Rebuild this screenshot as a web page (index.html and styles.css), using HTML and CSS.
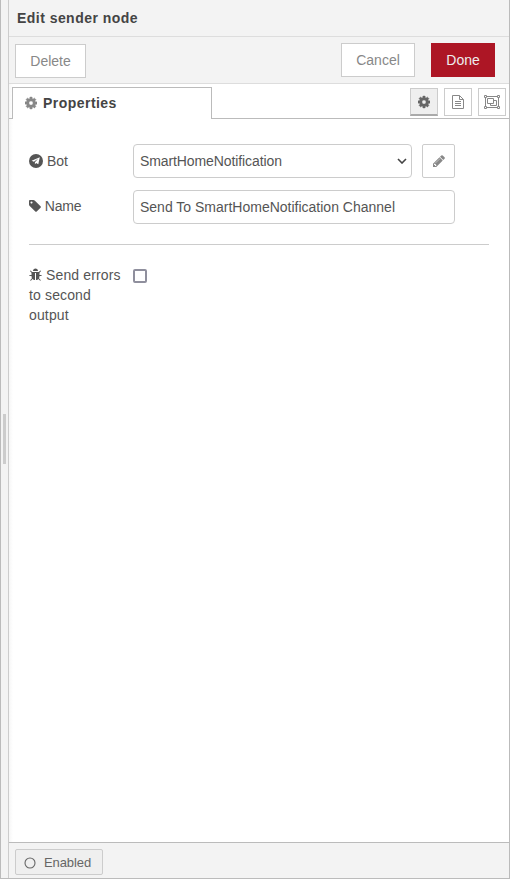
FILE: index.html
```html
<!DOCTYPE html>
<html lang="en">
<head>
<meta charset="utf-8">
<title>Edit sender node</title>
<link rel="stylesheet" href="styles.css">
</head>
<body>
<svg class="defs" width="0" height="0">
  <symbol id="cog" viewBox="128 0 1536 1792"><path d="M1152 896q0-106-75-181t-181-75-181 75-75 181 75 181 181 75 181-75 75-181zm512-109v222q0 12-8 23t-20 13l-185 28q-19 54-39 91 35 50 107 138 10 12 10 25t-9 23q-27 37-99 108t-94 71q-12 0-26-9l-138-108q-44 23-91 38-16 136-29 186-7 28-36 28h-222q-14 0-24.5-8.5t-11.5-21.5l-28-184q-49-16-90-37l-141 107q-10 9-25 9-14 0-25-11-126-114-165-168-7-10-7-23 0-12 8-23 15-21 51-66.5t54-70.5q-27-50-41-99l-183-27q-13-2-21-12.5t-8-23.5v-222q0-12 8-23t19-13l186-28q14-46 39-92-40-57-107-138-10-12-10-24 0-10 9-23 26-36 98.5-107.5t94.5-71.5q13 0 26 10l138 107q44-23 91-38 16-136 29-186 7-28 36-28h222q14 0 24.5 8.5t11.5 21.5l28 184q49 16 90 37l142-107q9-9 24-9 13 0 25 10 129 119 165 170 7 8 7 22 0 12-8 23-15 21-51 66.5t-54 70.5q26 50 41 98l183 28q13 2 21 12.5t8 23.5z"/></symbol>
</svg>
<div class="tray">
  <div class="resize-handle"><span class="grip"></span></div>
  <main class="editor">
    <header class="title">Edit sender node</header>
    <div class="toolbar">
      <button class="btn delete">Delete</button>
      <button class="btn cancel">Cancel</button>
      <button class="btn primary">Done</button>
    </div>
    <div class="tabs">
      <div class="tab"><svg class="cog" width="12" height="14"><use href="#cog"/></svg>Properties</div>
      <div class="tab-buttons">
        <button class="icon-btn selected"><svg class="cog" width="12" height="14"><use href="#cog"/></svg></button>
        <button class="icon-btn"><svg class="line" width="12" height="14" viewBox="0 0 12 14"><path d="M.5.5H7.500L11.500 4.500V13.500H.5zM7.500.5V4.500H11.500M3 6.500H9M3 8.500H9M3 10.500H9"/></svg></button>
        <button class="icon-btn"><svg class="line" width="16" height="14" viewBox="0 0 16 14"><path d="M3 1.500H13M3 12.500H13M1.500 3V11M14.500 3V11M.5.5h2v2h-2zM13.500.5h2v2h-2zM.5 11.500h2v2h-2zM13.500 11.500h2v2h-2zM3.500 3.500h6v5h-6zM9.500 5.500h3v5h-6v-2"/></svg></button>
      </div>
    </div>
    <section class="form">
      <div class="row">
        <label><svg width="14" height="14" viewBox="0 0 14 14"><circle cx="7" cy="7" r="7"/><path fill="#fff" d="M10.800 3.200 2.600 6.800 4.900 7.700 9.300 4.600 5.900 8.200 5.900 10.200 7.100 8.900 9.300 10.300z"/></svg> Bot</label>
        <div class="field select"><span>SmartHomeNotification</span><svg class="chevron" width="10" height="6" viewBox="0 0 10 6"><path d="M1 1 5 5 9 1"/></svg></div>
        <button class="edit"><svg width="12" height="14" viewBox="128 0 1536 1792"><path d="M491 1536l91-91-235-235-91 91v107h128v128h107zm523-928q0-22-22-22-10 0-17 7l-542 542q-7 7-7 17 0 22 22 22 10 0 17-7l542-542q7-7 7-17zm-54-192l416 416-832 832h-416v-416zm683 96q0 53-37 90l-166 166-416-416 166-165q36-38 90-38 53 0 91 38l235 234q37 39 37 91z"/></svg></button>
      </div>
      <div class="row">
        <label class="name-label"><svg width="12" height="14" viewBox="128 0 1536 1792"><path d="M576 448q0-53-37.500-90.500t-90.500-37.500-90.500 37.500-37.500 90.500 37.500 90.500 90.500 37.500 90.500-37.500 37.500-90.500zm1067 576q0 53-37 90l-491 492q-39 37-91 37-53 0-90-37l-715-716q-38-37-64.500-101t-26.500-117v-416q0-52 38-90t90-38h416q53 0 117 26.500t102 64.500l715 714q37 39 37 91z"/></svg> Name</label>
        <div class="field name">Send To SmartHomeNotification Channel</div>
      </div>
      <hr>
      <div class="row errors">
        <label><svg width="13" height="14" viewBox="64 0 1664 1792"><path d="M1696 960q0 26-19 45t-45 19h-224q0 171-67 290l208 209q19 19 19 45t-19 45q-18 19-45 19t-45-19l-198-197q-5 5-15 13t-42 28.500-65 36.500-82 29-97 13v-896h-128v896q-51 0-101.500-13.500t-87-33-66-39-43.500-32.500l-15-14-183 207q-20 21-48 21-24 0-43-16-19-18-20.500-44.500t15.500-46.500l202-227q-58-114-58-274h-224q-26 0-45-19t-19-45 19-45 45-19h224v-294l-173-173q-19-19-19-45t19-45 45-19 45 19l173 173h844l173-173q19-19 45-19t45 19 19 45-19 45l-173 173v294h224q26 0 45 19t19 45zm-480-576h-640q0-133 93.500-226.500t226.500-93.500 226.500 93.500 93.500 226.500z"/></svg> Send errors to second output</label>
        <span class="checkbox"></span>
      </div>
    </section>
    <footer class="footer"><button class="enabled"><svg class="ring" width="12" height="12" viewBox="0 0 12 12"><circle cx="6" cy="6" r="5"/></svg>Enabled</button></footer>
  </main>
</div>
</body>
</html>
```
FILE: styles.css
```css
* { box-sizing: border-box; }
body {
  margin: 0;
  font: 14px/20px "Liberation Sans", Arial, sans-serif;
  color: #555;
}
.defs { position: absolute; }
svg { fill: currentColor; flex: none; }
svg.line { fill: none; stroke: currentColor; }
svg.chevron { fill: none; stroke: #444; stroke-width: 1.6; }
svg.ring { fill: none; stroke: #666; stroke-width: 1.1; }
svg.cog { stroke: currentColor; stroke-width: 50; }
button { font: inherit; padding: 0; margin: 0; }
.tray {
  display: flex;
  height: 879px;
  border: 1px solid #bbb;
  border-top: 0;
}
.resize-handle {
  width: 8px;
  background: #f3f3f3;
  border-right: 1px solid #ccc;
  display: flex;
  align-items: center;
  padding-left: 2px;
}
.grip { width: 3px; height: 50px; background: #ccc; }
.editor {
  flex: 1;
  display: flex;
  flex-direction: column;
  background: linear-gradient(to right, #f6f6f6, #fff 4px);
}
.title {
  height: 37px;
  padding: 8px;
  font-weight: bold;
  letter-spacing: 0.46px;
  color: #444;
  background: #f3f3f3;
  border-bottom: 1px solid #ddd;
}
.toolbar {
  display: flex;
  align-items: flex-start;
  height: 47px;
  padding: 6px 14px 0 6px;
  background: #f3f3f3;
  border-bottom: 1px solid #ddd;
}
.btn {
  height: 34px;
  width: 74px;
  background: #fff;
  border: 1px solid #ccc;
  color: #888;
}
.btn.delete { width: 71px; margin: 1px auto 0 0; }
.btn.primary { width: 64px; margin-left: 16px; background: #ad1625; border-color: #ad1625; color: #eee; }
.tabs {
  display: flex;
  justify-content: space-between;
  height: 35px;
  padding: 3px 3px 0;
  background: linear-gradient(#bbb, #bbb) bottom / 100% 1px no-repeat;
}
.tab {
  display: flex;
  align-items: center;
  width: 200px;
  height: 32px;
  padding: 0 0 1px 12px;
  gap: 6px;
  border: 1px solid #bbb;
  border-bottom: 0;
  background: #fff;
  font-weight: bold;
  letter-spacing: 0.46px;
  color: #444;
}
.tab .cog { color: #888; }
.tab-buttons { display: flex; gap: 6px; padding-top: 1px; }
.icon-btn {
  display: flex;
  align-items: center;
  justify-content: center;
  width: 28px;
  height: 28px;
  background: #fff;
  border: 1px solid #ccc;
  color: #888;
}
.icon-btn.selected { background: #efefef; border-bottom: 2px solid #aaa; color: #666; }
.form { flex: 1; padding: 25px 20px 0; }
.row { display: flex; align-items: flex-start; margin-bottom: 12px; }
.row label { width: 104px; padding: 7px 8px 0 0; }
.row label.name-label { padding-top: 6px; letter-spacing: -0.15px; }
.row label svg { vertical-align: -2px; }
.field {
  display: flex;
  align-items: center;
  justify-content: space-between;
  height: 34px;
  padding: 0 4px 0 6px;
  border: 1px solid #ccc;
  border-radius: 4px;
}
.select { width: 279px; letter-spacing: -0.1px; }
.name { width: 322px; }
.edit {
  display: flex;
  align-items: center;
  justify-content: center;
  width: 33px;
  height: 34px;
  margin-left: 10px;
  background: #fff;
  border: 1px solid #ccc;
  border-radius: 2px;
  color: #888;
}
hr { margin: 20px 0; border: 0; border-top: 1px solid #ccc; }
.row.errors label { padding: 0 8px 0 0; letter-spacing: 0.14px; }
.checkbox {
  width: 14px;
  height: 14px;
  margin-top: 4px;
  border: 2px solid #8f8f9d;
  border-radius: 2px;
}
.footer {
  height: 36px;
  padding: 6px;
  background: #f3f3f3;
  border-top: 1px solid #bbb;
}
.enabled {
  display: flex;
  align-items: center;
  width: 88px;
  height: 26px;
  padding: 1px 0 0 8px;
  gap: 8px;
  background: #efefef;
  border: 1px solid #ccc;
  border-radius: 2px;
  font-size: 13px;
  letter-spacing: -0.1px;
  color: #666;
}
```
